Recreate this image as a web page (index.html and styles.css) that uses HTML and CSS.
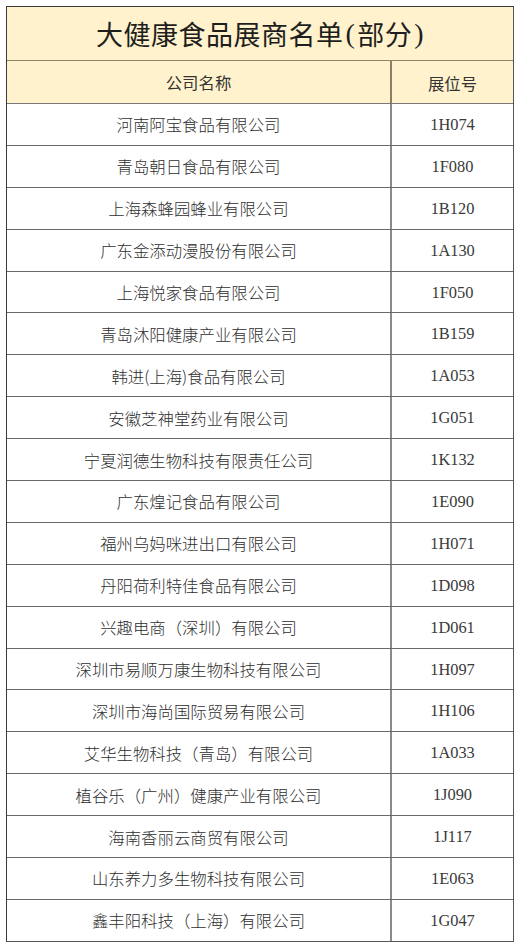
FILE: index.html
```html
<!DOCTYPE html>
<html lang="zh-CN">
<head>
<meta charset="utf-8">
<title>大健康食品展商名单(部分)</title>
<link rel="stylesheet" href="styles.css">
</head>
<body>
<div class="sheet">
  <div class="title">大健康食品展商名单<span class="paren">(</span>部分<span class="paren">)</span></div>
  <div class="row head"><div class="c1">公司名称</div><div class="c2">展位号</div></div>
  <div class="row"><div class="c1">河南阿宝食品有限公司</div><div class="c2">1H074</div></div>
  <div class="row"><div class="c1">青岛朝日食品有限公司</div><div class="c2">1F080</div></div>
  <div class="row"><div class="c1">上海森蜂园蜂业有限公司</div><div class="c2">1B120</div></div>
  <div class="row"><div class="c1">广东金添动漫股份有限公司</div><div class="c2">1A130</div></div>
  <div class="row"><div class="c1">上海悦家食品有限公司</div><div class="c2">1F050</div></div>
  <div class="row"><div class="c1">青岛沐阳健康产业有限公司</div><div class="c2">1B159</div></div>
  <div class="row"><div class="c1">韩进(上海)食品有限公司</div><div class="c2">1A053</div></div>
  <div class="row"><div class="c1">安徽芝神堂药业有限公司</div><div class="c2">1G051</div></div>
  <div class="row"><div class="c1">宁夏润德生物科技有限责任公司</div><div class="c2">1K132</div></div>
  <div class="row"><div class="c1">广东煌记食品有限公司</div><div class="c2">1E090</div></div>
  <div class="row"><div class="c1">福州乌妈咪进出口有限公司</div><div class="c2">1H071</div></div>
  <div class="row"><div class="c1">丹阳荷利特佳食品有限公司</div><div class="c2">1D098</div></div>
  <div class="row"><div class="c1">兴趣电商（深圳）有限公司</div><div class="c2">1D061</div></div>
  <div class="row"><div class="c1">深圳市易顺万康生物科技有限公司</div><div class="c2">1H097</div></div>
  <div class="row"><div class="c1">深圳市海尚国际贸易有限公司</div><div class="c2">1H106</div></div>
  <div class="row"><div class="c1">艾华生物科技（青岛）有限公司</div><div class="c2">1A033</div></div>
  <div class="row"><div class="c1">植谷乐（广州）健康产业有限公司</div><div class="c2">1J090</div></div>
  <div class="row"><div class="c1">海南香丽云商贸有限公司</div><div class="c2">1J117</div></div>
  <div class="row"><div class="c1">山东养力多生物科技有限公司</div><div class="c2">1E063</div></div>
  <div class="row"><div class="c1">鑫丰阳科技（上海）有限公司</div><div class="c2">1G047</div></div>
</div>
</body>
</html>
```
FILE: styles.css
```css
html, body {
  margin: 0;
  padding: 0;
  background: #ffffff;
}
body {
  padding: 6px 0 0 6px;
  font-family: "Liberation Serif", "Noto Sans CJK SC", serif;
  color: #333333;
}
.sheet {
  width: 506px;
  border: 1px solid #3a3a3a;
  border-right-color: #555;
  border-bottom-color: #555;
}
.title {
  height: 54px;
  background: #fff2cc;
  display: flex;
  align-items: center;
  justify-content: center;
  font-family: "Noto Sans CJK SC", sans-serif;
  font-size: 27px;
  font-weight: 400;
  letter-spacing: 0.5px;
  color: #1e1e1e;
  border-bottom: 1.5px solid #8f8466;
  padding-left: 2px;
  box-sizing: border-box;
}
.paren {
  font-family: "Liberation Serif", serif;
  margin: 0 2px;
  font-size: 28px;
}
.row {
  display: grid;
  grid-template-columns: 383px 1fr;
  height: 41.9px;
  border-top: 1px solid #6a6a6a;
  box-sizing: border-box;
}
.title + .row { border-top: none; }
.row.head {
  background: #fff2cc;
  height: 42px;
}
.row.head + .row { border-top-color: #777; }
.c1, .c2 {
  display: flex;
  align-items: center;
  justify-content: center;
  font-size: 16.4px;
}
.c1 {
  font-family: "Noto Sans CJK SC", sans-serif;
  font-weight: 300;
  color: #2e2e2e;
}
.c2 {
  border-left: 2px solid #8a8a8a;
  color: #3a3a3a;
  padding-top: 1px;
}
.head .c1, .head .c2 {
  font-family: "Noto Sans CJK SC", sans-serif;
  font-weight: 400;
  color: #333;
}
.head .c2 { border-left-color: #8a8066; }
```
